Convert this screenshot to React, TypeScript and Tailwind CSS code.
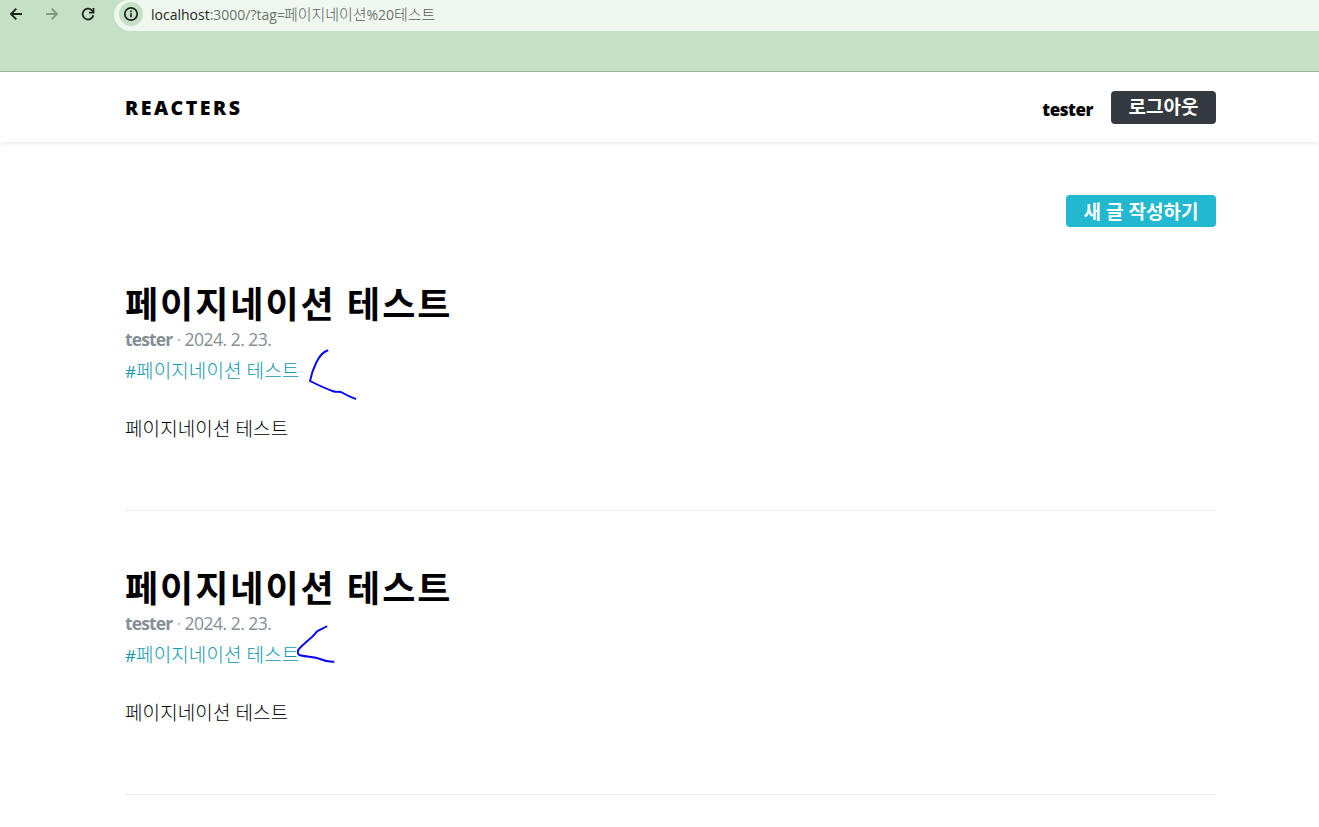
import React from "react";

const posts = [
  {
    id: 1,
    title: "페이지네이션 테스트",
    username: "tester",
    date: "2024. 2. 23.",
    tags: ["페이지네이션 테스트"],
    body: "페이지네이션 테스트",
    mark: "M327.5 350.5C323 352 319.500 356 316.500 362C313 369 311 376 310 381C316 384 326 389 334 391.500C337 392.500 339 391 342 392.500C347 395.500 350 397 355.500 398.800",
  },
  {
    id: 2,
    title: "페이지네이션 테스트",
    username: "tester",
    date: "2024. 2. 23.",
    tags: ["페이지네이션 테스트"],
    body: "페이지네이션 테스트",
    mark: "M326.500 342.500C323 344.500 319 346 317 347.500C314.500 350 313.500 352.500 309 355.500C304 360 299.500 363.500 298 366.500C297.300 369 298 371 301 371.500C308 373 315 373 320 375C325 377 329 378 333.500 377.700",
  },
];

const BrowserBar = () => {
  return (
    <div className="flex h-[72px] items-start border-b border-[#9db59f] bg-[#c5e1c5]">
      <div className="flex h-7 w-[114px] items-center gap-5 pl-2 text-[#1f2420]">
        <svg className="size-4" viewBox="0 0 16 16" fill="none" stroke="currentColor" strokeWidth="1.9">
          <path d="M14 8H3M8.300 2.700L3 8l5.300 5.300" />
        </svg>
        <svg className="size-4 text-[#849785]" viewBox="0 0 16 16" fill="none" stroke="currentColor" strokeWidth="1.9">
          <path d="M2 8h11M7.700 2.700L13 8l-5.300 5.300" />
        </svg>
        <svg className="size-4" viewBox="0 0 16 16" fill="none" stroke="currentColor" strokeWidth="1.8">
          <path d="M13.300 9.200A5.400 5.400 0 1 1 11.900 4.300L13.500 6" />
          <path d="M13.500 2v4.600H9" />
        </svg>
      </div>
      <div className="flex h-[31px] flex-1 items-start rounded-bl-[17px] rounded-tl-[15px] bg-[#f0f7f0] pl-[5px]">
        <div className="mt-0.5 flex size-6 items-center justify-center rounded-full bg-[#c5e1c5]">
          <svg className="size-4" viewBox="0 0 16 16" fill="none" stroke="#1f2420" strokeWidth="1.7">
            <circle cx="8" cy="8" r="6.2" />
            <path d="M8 7.300v4M8 4.500v1.700" />
          </svg>
        </div>
        <p className="ml-2 whitespace-nowrap text-[14px] leading-7 text-[#6c756d]">
          <span className="text-[#1f2420]">localhost</span>:3000/?tag=
          <span className="-ml-px text-[15px] font-light tracking-[-0.05px] text-[#555e56]">페이지네이션</span>%20
          <span className="text-[15px] font-light tracking-[-0.05px] text-[#555e56]">테스트</span>
        </p>
      </div>
    </div>
  );
};

const Header = () => {
  return (
    <header className="h-[70px] bg-white shadow-[0_2px_4px_rgba(0,0,0,0.08)]">
      <div className="mx-auto flex h-[70px] w-[1091px] translate-x-[11px] items-center justify-between">
        <div className="mt-px text-[19.5px] font-extrabold tracking-[2.5px]">REACTERS</div>
        <div className="flex items-center">
          <span className="mr-[18px] mt-[5px] text-[17px] font-extrabold tracking-[-0.45px]">tester</span>
          <button className="h-[33px] w-[105px] rounded bg-[#343a40] text-[19px] font-bold leading-none text-white">
            로그아웃
          </button>
        </div>
      </div>
    </header>
  );
};

type PostProps = {
  post: (typeof posts)[number];
};

const PostItem = ({ post }: PostProps) => {
  return (
    <article className="relative h-[284px] border-b border-[#e9ecef] pt-[55px]">
      <h2 className="h-11 whitespace-nowrap text-[36px] font-bold leading-[46px] tracking-[2px]">
        {post.title}
      </h2>
      <div className="h-[26px] text-[17.5px] leading-[26px] tracking-[-0.5px] text-[#868e96]">
        <b className="tracking-[-0.85px]">{post.username}</b>
        <span className="mx-1 text-[#adb5bd]">·</span>
        <span>{post.date}</span>
      </div>
      <div className="mt-1 h-[30px] leading-[30px]">
        {post.tags.map((tag) => (
          <a key={tag} className="text-[19px] font-light tracking-[0.1px] text-[#1098ad]">
            <span className="text-[17px] font-normal">#</span>
            {tag}
          </a>
        ))}
      </div>
      <p className="mt-[27px] text-[19px] font-light leading-[32px] tracking-[0.1px]">{post.body}</p>
      <svg
        className="pointer-events-none absolute left-0 top-0 h-[284px] w-[300px]"
        viewBox="125 227 300 284"
        fill="none"
        stroke="#0500fa"
        strokeWidth="1.9"
        strokeLinecap="round"
      >
        <path d={post.mark} />
      </svg>
    </article>
  );
};

const App = () => {
  return (
    <div className="h-[827px] overflow-hidden bg-white font-['Open_Sans','Noto_Sans_CJK_KR',sans-serif] text-black">
      <BrowserBar />
      <Header />
      <main className="mx-auto w-[1091px] translate-x-[11px] pt-[53px]">
        <div className="flex justify-end">
          <button className="h-8 w-[150px] rounded bg-[#22b8cf] pt-0.5 text-[19px] font-bold leading-none text-white">
            새 글 작성하기
          </button>
        </div>
        {posts.map((post) => (
          <PostItem key={post.id} post={post} />
        ))}
      </main>
    </div>
  );
};

export default App;
